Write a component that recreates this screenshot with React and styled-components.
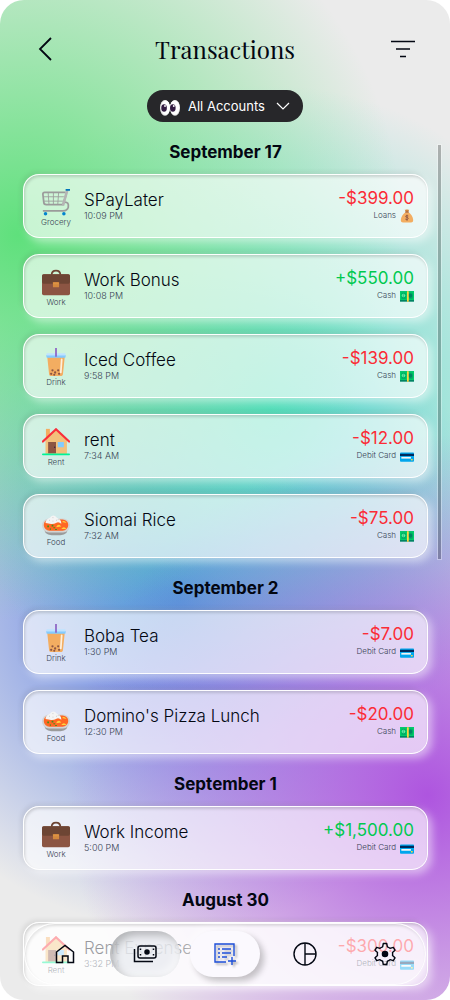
import React from "react";
import styled, { createGlobalStyle, css } from "styled-components";

const GlobalStyle = createGlobalStyle`
  *, *::before, *::after { box-sizing: border-box; }
  body { margin: 0; background: #fff; color: #030712; font-family: Inter, "Liberation Sans", sans-serif; }
  button, select { font: inherit; color: inherit; margin: 0; }
`;

const Screen = styled.div`
  position: relative;
  display: flex;
  flex-direction: column;
  height: 100vh;
  overflow: hidden;
  border-radius: 24px;
  background:
    radial-gradient(circle 360px at 95% 79.5%, #ae55df 0, #ae55df00 100%),
    radial-gradient(circle 385px at 4% 23.5%, #5fe07c 0, #5fe07c00 100%),
    radial-gradient(circle 325px at 60% 41%, #50ddc8 0, #50ddc800 100%),
    radial-gradient(circle 330px at 40% 60%, #5478e2 0, #5478e200 100%),
    #ebebeb;
`;

const Header = styled.header`
  display: flex;
  align-items: center;
  justify-content: space-between;
  padding: 32px 32px 0;
  height: 66px;
`;

const Title = styled.h1`
  margin: 0;
  font: 400 24px/34px "Playfair Display", "Liberation Serif", serif;
`;

const IconButton = styled.button`
  display: flex;
  padding: 0;
  border: 0;
  background: none;
`;

const AccountPicker = styled.label`
  display: flex;
  align-items: center;
  align-self: center;
  gap: 8px;
  height: 32px;
  margin-top: 24px;
  padding: 0 13px;
  border-radius: 16px;
  background: #27272a;
  color: #fff;
`;

const AccountSelect = styled.select`
  appearance: none;
  border: 0;
  padding: 0;
  background: none;
  color: #fff;
  font-size: 13px;
  line-height: 20px;
  width: 80px;
`;

const List = styled.main`
  flex: 1;
  min-height: 0;
  overflow: hidden;
  padding: 0 22px 0 23px;
`;

const DayTitle = styled.h2`
  margin: 16px 0 8px;
  font-size: 17px;
  font-weight: 700;
  line-height: 28px;
  text-align: center;
`;

const Rows = styled.ul`
  display: flex;
  flex-direction: column;
  gap: 16px;
  margin: 0;
  padding: 0;
  list-style: none;
`;

const Card = styled.li`
  display: flex;
  align-items: flex-start;
  gap: 14px;
  height: 64px;
  padding: 13px 13px 0 18px;
  border: 1px solid #fffffff0;
  border-radius: 16px;
  background: #ffffffa6;
  box-shadow:
    inset 1px 2px 3px #00000026,
    -2px -2px 5px #00000014,
    4px 4px 8px #ffffff80;
`;

const Category = styled.div`
  display: flex;
  flex-direction: column;
  align-items: center;
  width: 28px;
`;

const Caption = styled.span`
  font-size: 8px;
  font-weight: 300;
  line-height: 12px;
  color: #364153;
  white-space: nowrap;
`;

const Time = styled(Caption)`
  font-size: 9px;
  line-height: 8px;
`;

const Details = styled.div`
  display: flex;
  flex: 1;
  flex-direction: column;
`;

const Name = styled.span`
  font-size: 17px;
  font-weight: 300;
  line-height: 24px;
`;

const Sum = styled.div`
  display: flex;
  flex-direction: column;
  align-items: flex-end;
`;

const Amount = styled.span`
  font-size: 17px;
  font-weight: 400;
  line-height: 20px;
  color: ${(p) => (p.$income ? "#00c950" : "#fb2c36")};
`;

const Account = styled.div`
  display: flex;
  align-items: flex-start;
  gap: 4px;
  padding-top: 1px;
`;

const ScrollThumb = styled.div`
  position: absolute;
  top: 145px;
  right: 9px;
  width: 3px;
  height: calc(48% - 66px);
  background: #00000040;
  outline: 1px solid #ffffff50;
`;

const Nav = styled.nav`
  position: absolute;
  right: 24px;
  bottom: 15px;
  left: 24px;
  display: flex;
  align-items: center;
  justify-content: space-around;
  height: 62px;
  border: 1px solid #ffffffd0;
  border-radius: 31px;
  background: #ffffff98;
  box-shadow: inset 1px 2px 3px #00000018, 2px 2px 6px #ffffff90;
`;

const NavButton = styled.button`
  display: flex;
  align-items: center;
  justify-content: center;
  width: 70px;
  height: 46px;
  padding: 0;
  border: 0;
  border-radius: 23px;
  background: none;
  ${(p) => p.$kind === "current" && css`
    background: #e9ebf0d0;
    box-shadow: inset 4px 4px 8px #00000040, inset -4px -4px 8px #ffffff90;
  `}
  ${(p) => p.$kind === "raised" && css`
    background: #fbf9fe;
    color: #1d4ed8;
    box-shadow: 4px 4px 6px #00000038, -4px -4px 8px #ffffff60;
    svg { filter: drop-shadow(2px 2px 1px #00000050); }
  `}
`;

const Svg = ({ size = 24, box = "0 0 24 24", children, ...rest }) => (
  <svg width={size} height={size} viewBox={box} fill="none" stroke="currentColor" aria-hidden="true" {...rest}>
    {children}
  </svg>
);

const Emoji = ({ size, children }) => (
  <svg width={size} height={size} viewBox="0 0 32 32" aria-hidden="true">{children}</svg>
);

const Cart = () => (
  <Emoji size={28}>
    <g fill="none" stroke="#9b9b9b">
      <path d="M28 6 24 19H5Q2 19 2 16L1 7Q1 5 3 5H27" strokeWidth="2" />
      <path d="M7 5 8 19M13 5V19M19 5 18 19M2 10H25M2 15H24" strokeWidth="1" />
      <path d="M26 16Q31 16 30 22 29 26 24 26H1" strokeWidth="2" />
    </g>
    <path d="M29 2 24 20" stroke="#b4b4b4" strokeWidth="3" />
    <path d="M27 1h5v2h-5z" fill="#0074ba" />
    <circle cx="4" cy="29.500" r="2" fill="#0084ce" /><circle cx="25" cy="29.500" r="2" fill="#0084ce" />
  </Emoji>
);

const Briefcase = () => (
  <Emoji size={28}>
    <path d="M11 8Q11 3 16 3T21 8" fill="none" stroke="#6d4534" strokeWidth="2" />
    <rect y="7" width="32" height="24" rx="2" fill="#8c5543" />
    <path d="M0 9Q0 7 2 7H30Q32 7 32 9V15Q32 18 29 18H3Q0 18 0 15Z" fill="#6d4534" />
    <rect x="12.500" y="16" width="7" height="6" rx=".6" fill="#d3883e" />
    <path d="M12.500 18h7" stroke="#e19747" />
  </Emoji>
);

const Boba = () => (
  <Emoji size={28}>
    <path d="M6 10H26L24 29Q24 32 21 32H11Q8 32 8 29Z" fill="#f3ad61" />
    <path d="M5 8H27V10Q27 11 26 11H6Q5 11 5 10Z" fill="#83cbff" />
    <rect x="5" y="6" width="22" height="2.500" rx="1" fill="#bfe3ff" />
    <path d="M16 0V10" stroke="#8d65c5" strokeWidth="2" />
    <path d="M22.500 13 21.500 28" stroke="#fff0dc" strokeWidth="2" strokeLinecap="round" />
    <g fill="#8c5543">
      <circle cx="12" cy="25.500" r="1.300" /><circle cx="18.500" cy="25.500" r="1.300" /><circle cx="15" cy="28" r="1.300" />
      <circle cx="10.500" cy="29.500" r="1.300" /><circle cx="14" cy="30.600" r="1.200" /><circle cx="19.500" cy="29.500" r="1.300" />
    </g>
  </Emoji>
);

const House = () => (
  <Emoji size={28}>
    <path d="M4.500 1h4.500v12h-4.500z" fill="#f3ad61" />
    <path d="M4 14 16 2 28.500 14V30H4Z" fill="#f3c07b" />
    <path d="M1 15.500 16 1.500 31 15.500" fill="none" stroke="#f92f3a" strokeWidth="2.500" strokeLinecap="round" />
    <path d="M7 16h9v13H7z" fill="#8c5543" /><path d="M18 16h7v6h-7z" fill="#83cbff" />
    <circle cx="14.500" cy="22" r=".8" fill="#321b41" />
    <rect y="29" width="32" height="2" rx="1" fill="#00f397" />
  </Emoji>
);

const Curry = () => (
  <Emoji size={28}>
    <path d="M1 19H31Q30 31 21 31H11Q2 31 1 19Z" fill="#9b9b9b" />
    <rect y="12" width="32" height="16" rx="8" fill="#d3d3d3" />
    <rect x="2" y="13" width="28" height="13" rx="6.500" fill="#ff6723" />
    <path d="M4 17Q4 13 9 11 13 6 17 11 22 13 22 17V18Q19 15 16 17T9 18 4 17Z" fill="#f4f4f4" />
    <g fill="#fcd53f"><path d="M23 16Q25 13 28 17Z" /><path d="M16 22Q19 17 22 21Z" /><path d="M22 24Q25 20 28 24Z" /></g>
    <path d="M6 20h2v2H6zM11 19h2v2h-2zM9 23h1v2H9zM15 24h2v1h-2zM13 22h2v1h-2z" fill="#44911b" />
    <path d="M8 14h1M12 11h1M16 14h1M12 15h1M18 13h1" stroke="#c4c4c4" />
  </Emoji>
);

const MoneyBag = () => (
  <Emoji size={14}>
    <path d="M11 1 14 2 16 0 18 2 21 1 19 7H13Z" fill="#d3883e" />
    <path d="M13 7H19Q29 15 30 24 31 31 25 31H7Q1 31 2 24 3 15 13 7Z" fill="#f3ad61" />
    <path d="M12 7H20" stroke="#8c5543" strokeWidth="2" />
    <path d="M19 16Q12 13 13 18 19 19 19 22 17 26 12 23M16 13V27" fill="none" stroke="#8c5543" strokeWidth="2" />
  </Emoji>
);

const Cash = () => (
  <Emoji size={14}>
    <path d="M0 5h32v24H0z" fill="#008463" /><path d="M0 5h32v20H0z" fill="#00d26a" />
    <path d="M3 8H14V23H3ZM21 8H28L30 11V20L28 23H21Z" fill="#00b066" />
    <circle cx="23" cy="15" r="5" fill="#008463" /><circle cx="8" cy="15" r="4" fill="#66f5a5" />
    <path d="M10 13Q6 12 7 15 11 16 6 18" fill="none" stroke="#008463" />
    <path d="M16 5h4v24h-4z" fill="#fcd53f" />
  </Emoji>
);

const CardPicture = () => (
  <Emoji size={14}>
    <rect y="8" width="32" height="21" rx="2" fill="#00a6ed" />
    <path d="M0 11h32v5H0z" fill="#002a5c" /><path d="M3 18h22v4H3z" fill="#f4f4f4" /><path d="M25 23h4v3h-4z" fill="#fcd53f" />
  </Emoji>
);

const Eyes = () => (
  <Emoji size={20}>
    <ellipse cx="8" cy="19" rx="8" ry="12.500" fill="#e6e6e6" /><ellipse cx="24" cy="19" rx="8" ry="12.500" fill="#e6e6e6" />
    <ellipse cx="9" cy="18.500" rx="7" ry="11.500" fill="#fff" /><ellipse cx="23.500" cy="18.500" rx="7.500" ry="11.500" fill="#fff" />
    <ellipse cx="6.500" cy="19" rx="4.500" ry="6" fill="#321b41" /><ellipse cx="20.500" cy="19" rx="4.500" ry="6" fill="#321b41" />
    <circle cx="8" cy="16" r="1.500" fill="#fff" /><circle cx="22" cy="16" r="1.500" fill="#fff" />
  </Emoji>
);

const categories = { Grocery: Cart, Work: Briefcase, Drink: Boba, Rent: House, Food: Curry };
const accounts = { Loans: MoneyBag, Cash: Cash, "Debit Card": CardPicture };

const days = [
  { date: "September 17", rows: [
    ["Grocery", "SPayLater", "10:09 PM", "-$399.00", "Loans"],
    ["Work", "Work Bonus", "10:08 PM", "+$550.00", "Cash"],
    ["Drink", "Iced Coffee", "9:58 PM", "-$139.00", "Cash"],
    ["Rent", "rent", "7:34 AM", "-$12.00", "Debit Card"],
    ["Food", "Siomai Rice", "7:32 AM", "-$75.00", "Cash"],
  ] },
  { date: "September 2", rows: [
    ["Drink", "Boba Tea", "1:30 PM", "-$7.00", "Debit Card"],
    ["Food", "Domino's Pizza Lunch", "12:30 PM", "-$20.00", "Cash"],
  ] },
  { date: "September 1", rows: [["Work", "Work Income", "5:00 PM", "+$1,500.00", "Debit Card"]] },
  { date: "August 30", rows: [["Rent", "Rent Expense", "3:32 PM", "-$300.00", "Debit Card"]] },
];

function Transaction({ row: [category, name, time, amount, account] }) {
  const CategoryIcon = categories[category];
  const AccountIcon = accounts[account];
  return (
    <Card>
      <Category><CategoryIcon /><Caption>{category}</Caption></Category>
      <Details><Name>{name}</Name><Time>{time}</Time></Details>
      <Sum>
        <Amount $income={amount[0] === "+"}>{amount}</Amount>
        <Account><Caption>{account}</Caption><AccountIcon /></Account>
      </Sum>
    </Card>
  );
}

export default function App() {
  return (
    <Screen>
      <GlobalStyle />
      <Header>
        <IconButton aria-label="Back"><Svg size={30} box="0 0 30 30" strokeWidth="1.800"><path d="M19 4 8 15l11 11" /></Svg></IconButton>
        <Title>Transactions</Title>
        <IconButton aria-label="Filter"><Svg size={30} box="0 0 30 30" strokeWidth="1.600"><path d="M3 7.500H27M8 15H22M12 22.500H18" /></Svg></IconButton>
      </Header>
      <AccountPicker>
        <Eyes />
        <AccountSelect aria-label="Account"><option>All Accounts</option></AccountSelect>
        <Svg size={14} box="0 0 14 14" strokeWidth="1.200"><path d="m1 4 6 6 6-6" /></Svg>
      </AccountPicker>
      <List>
        {days.map((day) => (
          <section key={day.date}>
            <DayTitle>{day.date}</DayTitle>
            <Rows>{day.rows.map((row) => <Transaction key={row[1]} row={row} />)}</Rows>
          </section>
        ))}
      </List>
      <ScrollThumb />
      <Nav aria-label="Main">
        <NavButton aria-label="Home">
          <Svg size={20} box="0 0 20 20" strokeWidth="1.500"><path d="M1.500 8 10 1.500 18.500 8V18.500H13V12H7.500V18.500H1.500Z" /></Svg>
        </NavButton>
        <NavButton aria-label="Transactions" $kind="current">
          <Svg strokeWidth="1.500"><rect x="5" y="4" width="18" height="12" rx="2" /><circle cx="14" cy="10" r="2" fill="currentColor" /><path d="M1.500 7V19.500H20M7.500 8V6.500M20.500 8V6.500M7.500 12V13.500M20.500 12V13.500" /></Svg>
        </NavButton>
        <NavButton aria-label="Add transaction" $kind="raised">
          <Svg strokeWidth="1.400"><path d="M13 20H2V2H21V14M19 15V23M15 19H23" /><path d="M9 7H18M9 11H18M9 15H14M5 7H7M5 11H7M5 15H7" /></Svg>
        </NavButton>
        <NavButton aria-label="Reports">
          <Svg strokeWidth="1.400"><circle cx="12" cy="12" r="11" /><path d="M12 1V23M12 12H23" /></Svg>
        </NavButton>
        <NavButton aria-label="Settings">
          <Svg strokeWidth="1.400" strokeLinejoin="round"><path d="M10.300 1.500H13.700L14.400 4.800 Q15.800 5.300 17 6.300L20.300 5.300 22 8.200 19.500 10.500Q19.800 12 19.500 13.500L22 15.800 20.300 18.700 17 17.700Q15.800 18.700 14.400 19.200L13.700 22.500H10.300L9.600 19.200Q8.200 18.700 7 17.700L3.700 18.700 2 15.800 4.500 13.500Q4.200 12 4.500 10.500L2 8.200 3.700 5.300 7 6.300Q8.200 5.300 9.600 4.800Z" /><circle cx="12" cy="12" r="2.600" fill="currentColor" /></Svg>
        </NavButton>
      </Nav>
    </Screen>
  );
}
